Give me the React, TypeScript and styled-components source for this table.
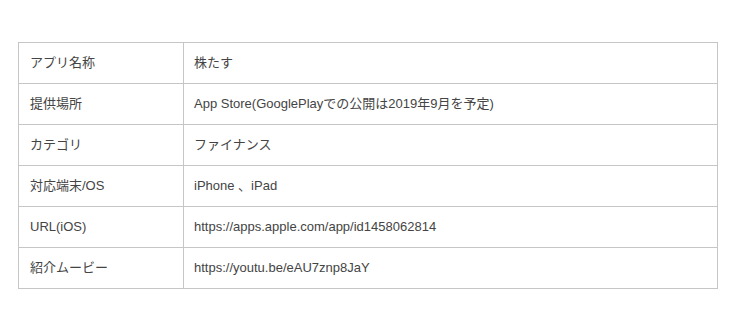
import React from "react";
import styled, { createGlobalStyle } from "styled-components";

const Global = createGlobalStyle`
  html, body { margin: 0; padding: 0; background: #fff; }
  body { font-family: "Liberation Sans", Arial, "Noto Sans CJK JP", sans-serif; }
`;

const Page = styled.div`
  padding: 42px 22px 0 18px;
`;

const Table = styled.table`
  width: 700px;
  border-collapse: collapse;
  table-layout: fixed;
  font-size: 13px;
  color: #444;
`;

const Row = styled.tr``;

const Cell = styled.td<{ $head?: boolean }>`
  height: 40px;
  padding: 0 10px 0 ${(p) => (p.$head ? "11px" : "10px")};
  border: 1px solid #c6c6c6;
  vertical-align: middle;
  line-height: 16px;
  box-sizing: content-box;
`;

const rows: [string, string][] = [
  ["アプリ名称", "株たす"],
  ["提供場所", "App Store(GooglePlayでの公開は2019年9月を予定)"],
  ["カテゴリ", "ファイナンス"],
  ["対応端末/OS", "iPhone 、iPad"],
  ["URL(iOS)", "https://apps.apple.com/app/id1458062814"],
  ["紹介ムービー", "https://youtu.be/eAU7znp8JaY"],
];

export default function App() {
  return (
    <>
      <Global />
      <Page>
        <Table>
          <colgroup>
            <col style={{ width: 165 }} />
            <col />
          </colgroup>
          <tbody>
            {rows.map(([k, v]) => (
              <Row key={k}>
                <Cell $head>{k}</Cell>
                <Cell>{v}</Cell>
              </Row>
            ))}
          </tbody>
        </Table>
      </Page>
    </>
  );
}
